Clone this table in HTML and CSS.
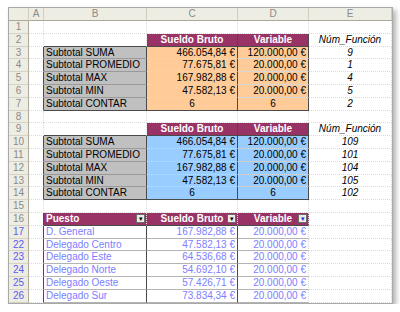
FILE: index.html
```html
<!doctype html>
<html>
    <head>
        <meta charset="utf-8" />
        <title>Subtotales</title>
        <link rel="stylesheet" href="styles.css">
    </head>
    <body>
        <div class="sheet">
            <div class="row colhead"><div class="rh"></div><div>A</div><div>B</div><div>C</div><div>D</div><div>E</div></div>

            <div class="row"><div class="rh">1</div><div class="c"></div><div class="c"></div><div class="c"></div><div class="c"></div><div class="c"></div></div>
            <div class="row"><div class="rh">2</div><div class="c"></div><div class="c bb"></div><div class="c th br">Sueldo Bruto</div><div class="c th br">Variable</div><div class="c fn">Núm_Función</div></div>
            <div class="row"><div class="rh">3</div><div class="c br"></div><div class="c lbl">Subtotal SUMA</div><div class="c org num">466.054,84 €</div><div class="c org num">120.000,00 €</div><div class="c fn">9</div></div>
            <div class="row"><div class="rh">4</div><div class="c br"></div><div class="c lbl">Subtotal PROMEDIO</div><div class="c org num">77.675,81 €</div><div class="c org num">20.000,00 €</div><div class="c fn">1</div></div>
            <div class="row"><div class="rh">5</div><div class="c br"></div><div class="c lbl">Subtotal MAX</div><div class="c org num">167.982,88 €</div><div class="c org num">20.000,00 €</div><div class="c fn">4</div></div>
            <div class="row"><div class="rh">6</div><div class="c br"></div><div class="c lbl">Subtotal MIN</div><div class="c org num">47.582,13 €</div><div class="c org num">20.000,00 €</div><div class="c fn">5</div></div>
            <div class="row"><div class="rh">7</div><div class="c br"></div><div class="c lbl bb">Subtotal CONTAR</div><div class="c org mid bb">6</div><div class="c org mid bb">6</div><div class="c fn">2</div></div>
            <div class="row"><div class="rh">8</div><div class="c"></div><div class="c"></div><div class="c"></div><div class="c"></div><div class="c"></div></div>
            <div class="row"><div class="rh">9</div><div class="c"></div><div class="c bb"></div><div class="c th br">Sueldo Bruto</div><div class="c th br">Variable</div><div class="c fn">Núm_Función</div></div>
            <div class="row"><div class="rh">10</div><div class="c br"></div><div class="c lbl">Subtotal SUMA</div><div class="c blu num">466.054,84 €</div><div class="c blu num">120.000,00 €</div><div class="c fn">109</div></div>
            <div class="row"><div class="rh">11</div><div class="c br"></div><div class="c lbl">Subtotal PROMEDIO</div><div class="c blu num">77.675,81 €</div><div class="c blu num">20.000,00 €</div><div class="c fn">101</div></div>
            <div class="row"><div class="rh">12</div><div class="c br"></div><div class="c lbl">Subtotal MAX</div><div class="c blu num">167.982,88 €</div><div class="c blu num">20.000,00 €</div><div class="c fn">104</div></div>
            <div class="row"><div class="rh">13</div><div class="c br"></div><div class="c lbl">Subtotal MIN</div><div class="c blu num">47.582,13 €</div><div class="c blu num">20.000,00 €</div><div class="c fn">105</div></div>
            <div class="row"><div class="rh">14</div><div class="c br"></div><div class="c lbl bb">Subtotal CONTAR</div><div class="c blu mid bb">6</div><div class="c blu mid bb">6</div><div class="c fn">102</div></div>
            <div class="row"><div class="rh">15</div><div class="c"></div><div class="c"></div><div class="c"></div><div class="c"></div><div class="c"></div></div>
            <div class="row"><div class="rh">16</div><div class="c br"></div><div class="c th left">Puesto<span class="drop">▾</span></div><div class="c th">Sueldo Bruto<span class="drop">▾</span></div><div class="c th">Variable<span class="drop on">▾</span></div><div class="c"></div></div>

            <div class="row"><div class="rh hit">17</div><div class="c br"></div><div class="c lst br">D. General</div><div class="c lst num br">167.982,88 €</div><div class="c lst num">20.000,00 €</div><div class="c"></div></div>
            <div class="row"><div class="rh hit">22</div><div class="c br"></div><div class="c lst br">Delegado Centro</div><div class="c lst num br">47.582,13 €</div><div class="c lst num">20.000,00 €</div><div class="c"></div></div>
            <div class="row"><div class="rh hit">23</div><div class="c br"></div><div class="c lst br">Delegado Este</div><div class="c lst num br">64.536,68 €</div><div class="c lst num">20.000,00 €</div><div class="c"></div></div>
            <div class="row"><div class="rh hit">24</div><div class="c br"></div><div class="c lst br">Delegado Norte</div><div class="c lst num br">54.692,10 €</div><div class="c lst num">20.000,00 €</div><div class="c"></div></div>
            <div class="row"><div class="rh hit">25</div><div class="c br"></div><div class="c lst br">Delegado Oeste</div><div class="c lst num br">57.426,71 €</div><div class="c lst num">20.000,00 €</div><div class="c"></div></div>
            <div class="row"><div class="rh hit">26</div><div class="c br"></div><div class="c lst br">Delegado Sur</div><div class="c lst num br">73.834,34 €</div><div class="c lst num">20.000,00 €</div><div class="c"></div></div>
        </div>
    </body>
</html>
```

FILE: styles.css
```css
html {
    margin: 0px;
    padding: 0px;
}

body {
    margin: 0px;
    padding: 7px 0px 0px 8px;
    background-color: white;
    font-family: "Liberation Sans", Arial, sans-serif;
    font-size: 10px;
    color: black;
}

.sheet {
    width: 383px;
    border: 1px solid #a9a9a9;
    box-shadow: 3px 3px 5px rgba(0, 0, 0, 0.3);
    background-color: white;
    overflow: hidden;
}

.row {
    display: grid;
    grid-template-columns: 20px 15px 103px 91px 71px 83px;
    height: 12.8px;
}

.row > div {
    box-sizing: border-box;
    line-height: 12px;
    white-space: nowrap;
    overflow: hidden;
}

.colhead {
    height: 13px;
    background-color: #eeede3;
    color: #8a8a8a;
    text-align: center;
}

.colhead > div {
    border-right: 1px solid #cfcdc0;
    border-bottom: 1px solid #aca899;
}

.rh {
    background-color: #eeede3;
    color: #8a8a8a;
    text-align: center;
    border-right: 1px solid #aca899;
    border-bottom: 1px solid #d6d3c6;
}

.rh.hit {
    color: #5c5cf0;
}

.c {
    border-right: 1px dotted #dadada;
    border-bottom: 1px dotted #dadada;
    padding: 0px 2px;
}

.bb {
    border-bottom: 1px solid #4a4a4a !important;
}

.br {
    border-right: 1px solid #4a4a4a !important;
}

.th {
    background-color: #993366;
    color: white;
    font-weight: bold;
    text-align: center;
    position: relative;
    border-bottom: 1px solid #4a4a4a;
}

.th.left {
    text-align: left;
}

.drop {
    position: absolute;
    right: 1px;
    top: 1px;
    width: 9px;
    height: 9px;
    box-sizing: border-box;
    background-color: #ecebe6;
    border: 1px solid #6b6b6b;
    color: black;
    font-size: 7px;
    line-height: 7px;
    text-align: center;
    font-weight: normal;
}

.drop.on {
    color: #2b2bd6;
}

.lbl {
    background-color: #c0c0c0;
    border-right: 1px solid #4a4a4a;
    border-bottom: 1px solid #9a9a9a;
}

.org {
    background-color: #ffcc99;
    border-right: 1px solid #4a4a4a;
}

.blu {
    background-color: #99ccff;
    border-right: 1px solid #4a4a4a;
}

.num {
    text-align: right;
}

.mid {
    text-align: center;
}

.fn {
    font-style: italic;
    text-align: center;
}

.lst {
    color: #7d7dff;
    border-bottom: 1px solid #b4b4b4;
}
```
